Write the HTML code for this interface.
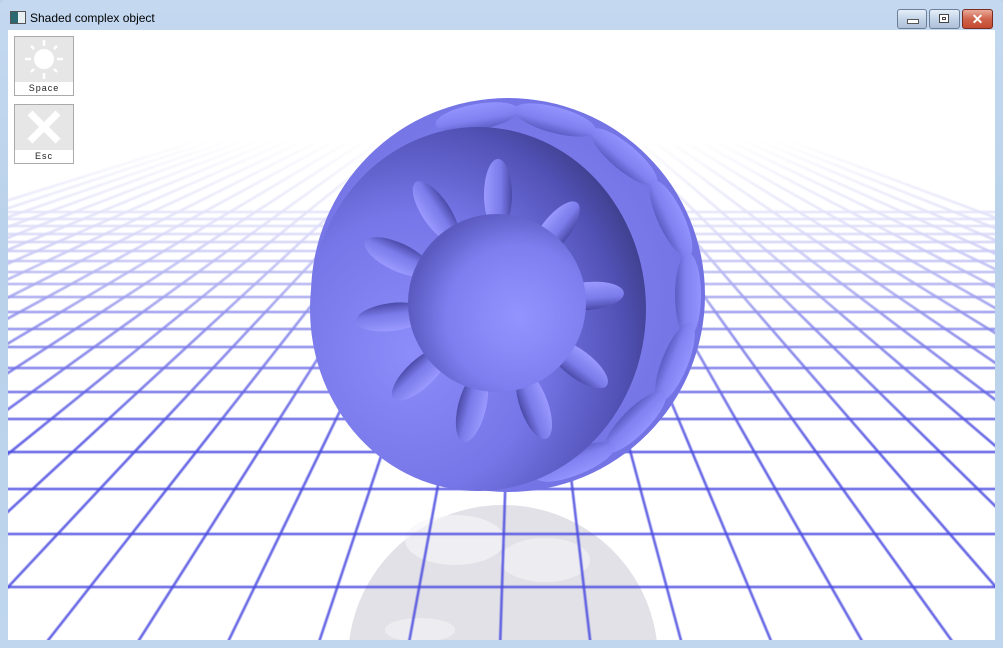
<!DOCTYPE html>
<html><head><meta charset="utf-8"><style>
html,body{margin:0;padding:0;width:1003px;height:648px;overflow:hidden;background:#bcd3ea;font-family:"Liberation Sans",sans-serif}
.frame{position:absolute;left:0;top:0;width:1003px;height:648px;background:linear-gradient(#c4d9f0,#b9d1ea 40%,#bfd6ee);border-radius:6px 6px 0 0}
.title{position:absolute;left:30px;top:11px;font-size:12px;color:#000}
.ico{position:absolute;left:10px;top:11px;width:14px;height:11px;border:1px solid #555;background:linear-gradient(90deg,#2a6a70 50%,#e8f0f4 50%)}
.btn{position:absolute;top:9px;height:18px;border:1px solid #6c7f99;border-radius:3px;background:linear-gradient(#e6eef8,#c3d3e8 50%,#aebfd8)}
.client{position:absolute;left:8px;top:30px;width:987px;height:610px;background:#fff;overflow:hidden}
.kb{position:absolute;left:6px;width:58px;height:58px;border:1px solid #aaa;background:#e6e6e6}
.kb span{position:absolute;left:0;right:0;bottom:0;height:13px;background:#fff;font-size:9px;letter-spacing:1px;text-align:center;line-height:13px;color:#222}
</style></head><body>
<div class="frame"></div>
<div class="ico"></div>
<div class="title">Shaded complex object</div>
<div class="btn" style="left:897px;width:28px"><div style="position:absolute;left:9px;top:9px;width:10px;height:3px;background:#fff;border:1px solid #555"></div></div>
<div class="btn" style="left:929px;width:29px"><div style="position:absolute;left:9px;top:4px;width:8px;height:7px;border:1px solid #444;background:#fff;box-shadow:inset 0 0 0 2px #fff,inset 0 0 0 3px #444"></div></div>
<div class="btn" style="left:962px;width:29px;border-color:#7a2b1f;background:linear-gradient(#e9a99a,#d0634c 50%,#c34a30)"><div style="position:absolute;left:0;right:0;top:0;text-align:center;color:#fff;font-weight:bold;font-size:14px;line-height:18px">✕</div></div>
<div class="client">
<svg width="987" height="610" viewBox="8 30 987 610" style="position:absolute;left:0;top:0">
<defs>
<linearGradient id="fd" gradientUnits="userSpaceOnUse" x1="0" y1="140" x2="0" y2="440">
<stop offset="0" stop-color="#fff" stop-opacity="1"/><stop offset="0.3" stop-color="#fff" stop-opacity="0.8"/><stop offset="0.6" stop-color="#fff" stop-opacity="0.35"/><stop offset="1" stop-color="#fff" stop-opacity="0"/></linearGradient>
<radialGradient id="cav" cx="0.3" cy="0.62" r="0.85">
<stop offset="0" stop-color="#8c8cfa"/><stop offset="0.45" stop-color="#7676e8"/><stop offset="0.75" stop-color="#5050b4"/><stop offset="1" stop-color="#2e2e66"/></radialGradient>
<radialGradient id="outer" cx="0.45" cy="0.5" r="0.6">
<stop offset="0" stop-color="#8a8af8"/><stop offset="1" stop-color="#7070e2"/></radialGradient>
<radialGradient id="inn" cx="0.62" cy="0.58" r="0.62">
<stop offset="0" stop-color="#9494ff"/><stop offset="0.65" stop-color="#7e7ef0"/><stop offset="1" stop-color="#5a5ac0"/></radialGradient>
<linearGradient id="sp" x1="0" y1="0" x2="0" y2="1">
<stop offset="0" stop-color="#9a9aff"/><stop offset="0.6" stop-color="#7a7aea"/><stop offset="1" stop-color="#4a4aa8"/></linearGradient>
<linearGradient id="bump" x1="0" y1="0" x2="0" y2="1">
<stop offset="0" stop-color="#9494ff"/><stop offset="0.6" stop-color="#8080f0"/><stop offset="1" stop-color="#5c5cc4"/></linearGradient>
<filter id="bl"><feGaussianBlur stdDeviation="0.6"/></filter>
</defs>
<!-- reflection -->
<g opacity="0.5">
<circle cx="503" cy="660" r="155" fill="#c4c4d0"/>
<ellipse cx="455" cy="540" rx="50" ry="25" fill="#eeeef4" opacity="0.7"/>
<ellipse cx="545" cy="560" rx="45" ry="22" fill="#eeeef4" opacity="0.6"/>
<ellipse cx="420" cy="630" rx="35" ry="12" fill="#eeeef4" opacity="0.6"/>
</g>
<g stroke="#4a4ae0" stroke-width="2.6" stroke-opacity="0.85" filter="url(#bl)">
<line x1="0" x2="1003" y1="587" y2="587"/><line x1="0" x2="1003" y1="534" y2="534"/>
<line x1="0" x2="1003" y1="489" y2="489"/><line x1="0" x2="1003" y1="452" y2="452"/>
<line x1="0" x2="1003" y1="419" y2="419"/><line x1="0" x2="1003" y1="392" y2="392"/>
<line x1="0" x2="1003" y1="368" y2="368"/><line x1="0" x2="1003" y1="347" y2="347"/>
<line x1="0" x2="1003" y1="329" y2="329"/><line x1="0" x2="1003" y1="312" y2="312"/>
<line x1="0" x2="1003" y1="297" y2="297"/><line x1="0" x2="1003" y1="284" y2="284"/>
<line x1="0" x2="1003" y1="272" y2="272"/><line x1="0" x2="1003" y1="261" y2="261"/>
<line x1="0" x2="1003" y1="251" y2="251"/><line x1="0" x2="1003" y1="242" y2="242"/>
<line x1="0" x2="1003" y1="234" y2="234"/><line x1="0" x2="1003" y1="226" y2="226"/>
<line x1="0" x2="1003" y1="219" y2="219"/><line x1="0" x2="1003" y1="212" y2="212"/>
<line x1="-1421" y1="648" x2="520" y2="40"/><line x1="-1330" y1="648" x2="520" y2="40"/>
<line x1="-1238" y1="648" x2="520" y2="40"/><line x1="-1147" y1="648" x2="520" y2="40"/>
<line x1="-1055" y1="648" x2="520" y2="40"/><line x1="-964" y1="648" x2="520" y2="40"/>
<line x1="-872" y1="648" x2="520" y2="40"/><line x1="-781" y1="648" x2="520" y2="40"/>
<line x1="-689" y1="648" x2="520" y2="40"/><line x1="-598" y1="648" x2="520" y2="40"/>
<line x1="-506" y1="648" x2="520" y2="40"/><line x1="-415" y1="648" x2="520" y2="40"/>
<line x1="-323" y1="648" x2="520" y2="40"/><line x1="-232" y1="648" x2="520" y2="40"/>
<line x1="-140" y1="648" x2="520" y2="40"/><line x1="-49" y1="648" x2="520" y2="40"/>
<line x1="42" y1="648" x2="520" y2="40"/><line x1="134" y1="648" x2="520" y2="40"/>
<line x1="225" y1="648" x2="520" y2="40"/><line x1="317" y1="648" x2="520" y2="40"/>
<line x1="408" y1="648" x2="520" y2="40"/><line x1="500" y1="648" x2="520" y2="40"/>
<line x1="591" y1="648" x2="520" y2="40"/><line x1="683" y1="648" x2="520" y2="40"/>
<line x1="774" y1="648" x2="520" y2="40"/><line x1="866" y1="648" x2="520" y2="40"/>
<line x1="957" y1="648" x2="520" y2="40"/><line x1="1049" y1="648" x2="520" y2="40"/>
<line x1="1140" y1="648" x2="520" y2="40"/><line x1="1232" y1="648" x2="520" y2="40"/>
<line x1="1323" y1="648" x2="520" y2="40"/><line x1="1415" y1="648" x2="520" y2="40"/>
<line x1="1506" y1="648" x2="520" y2="40"/><line x1="1598" y1="648" x2="520" y2="40"/>
<line x1="1689" y1="648" x2="520" y2="40"/><line x1="1781" y1="648" x2="520" y2="40"/>
<line x1="1872" y1="648" x2="520" y2="40"/><line x1="1964" y1="648" x2="520" y2="40"/>
<line x1="2055" y1="648" x2="520" y2="40"/><line x1="2147" y1="648" x2="520" y2="40"/>
</g>
<rect x="0" y="30" width="1003" height="420" fill="url(#fd)"/>
<rect x="0" y="30" width="1003" height="112" fill="#fff"/>
<!-- outer sphere with bumps -->
<circle cx="508" cy="295" r="197" fill="url(#outer)"/>
<g fill="url(#bump)">
<ellipse cx="0" cy="0" rx="42" ry="13" transform="translate(477 117) rotate(-10)"/>
<ellipse cx="0" cy="0" rx="42" ry="13" transform="translate(555 120) rotate(15)"/>
<ellipse cx="0" cy="0" rx="42" ry="13" transform="translate(624 157) rotate(40)"/>
<ellipse cx="0" cy="0" rx="42" ry="13" transform="translate(671 219) rotate(65)"/>
<ellipse cx="0" cy="0" rx="42" ry="13" transform="translate(688 295) rotate(90)"/>
<ellipse cx="0" cy="0" rx="42" ry="13" transform="translate(675 362) rotate(112)"/>
<ellipse cx="0" cy="0" rx="42" ry="13" transform="translate(635 422) rotate(135)"/>
<ellipse cx="0" cy="0" rx="42" ry="13" transform="translate(575 462) rotate(158)"/>
</g>
<!-- cavity -->
<ellipse cx="478" cy="309" rx="168" ry="182" fill="url(#cav)"/>
<!-- spikes -->
<g fill="url(#sp)">
<ellipse cx="498" cy="195" rx="36" ry="14" transform="rotate(-90 498 195)"/>
<ellipse cx="436" cy="212" rx="36" ry="14" transform="rotate(-124 436 212)"/>
<ellipse cx="398" cy="257" rx="36" ry="14" transform="rotate(-155 398 257)"/>
<ellipse cx="392" cy="317" rx="36" ry="14" transform="rotate(173 392 317)"/>
<ellipse cx="420" cy="374" rx="36" ry="14" transform="rotate(137 420 374)"/>
<ellipse cx="472" cy="407" rx="36" ry="14" transform="rotate(104 472 407)"/>
<ellipse cx="534" cy="405" rx="36" ry="14" transform="rotate(70 534 405)"/>
<ellipse cx="578" cy="364" rx="36" ry="14" transform="rotate(37 578 364)"/>
<ellipse cx="588" cy="296" rx="36" ry="14" transform="rotate(-5 588 296)"/>
<ellipse cx="555" cy="231" rx="36" ry="14" transform="rotate(-52 555 231)"/>
</g>
<circle cx="497" cy="303" r="89" fill="url(#inn)"/>
</svg>
<div class="kb" style="top:6px"><svg width="58" height="45" viewBox="0 0 58 45"><g stroke="#fff" stroke-width="2.5"><line x1="29" y1="3" x2="29" y2="9"/><line x1="29" y1="36" x2="29" y2="42"/><line x1="10" y1="22" x2="16" y2="22"/><line x1="42" y1="22" x2="48" y2="22"/><line x1="16" y1="9" x2="19" y2="12"/><line x1="39" y1="32" x2="42" y2="35"/><line x1="42" y1="9" x2="39" y2="12"/><line x1="16" y1="35" x2="19" y2="32"/></g><circle cx="29" cy="22" r="10" fill="#fff"/></svg><span>Space</span></div>
<div class="kb" style="top:74px"><svg width="58" height="45" viewBox="0 0 58 45"><g stroke="#fff" stroke-width="7"><line x1="15" y1="8" x2="43" y2="36"/><line x1="43" y1="8" x2="15" y2="36"/></g></svg><span>Esc</span></div>
</div>
</body></html>
